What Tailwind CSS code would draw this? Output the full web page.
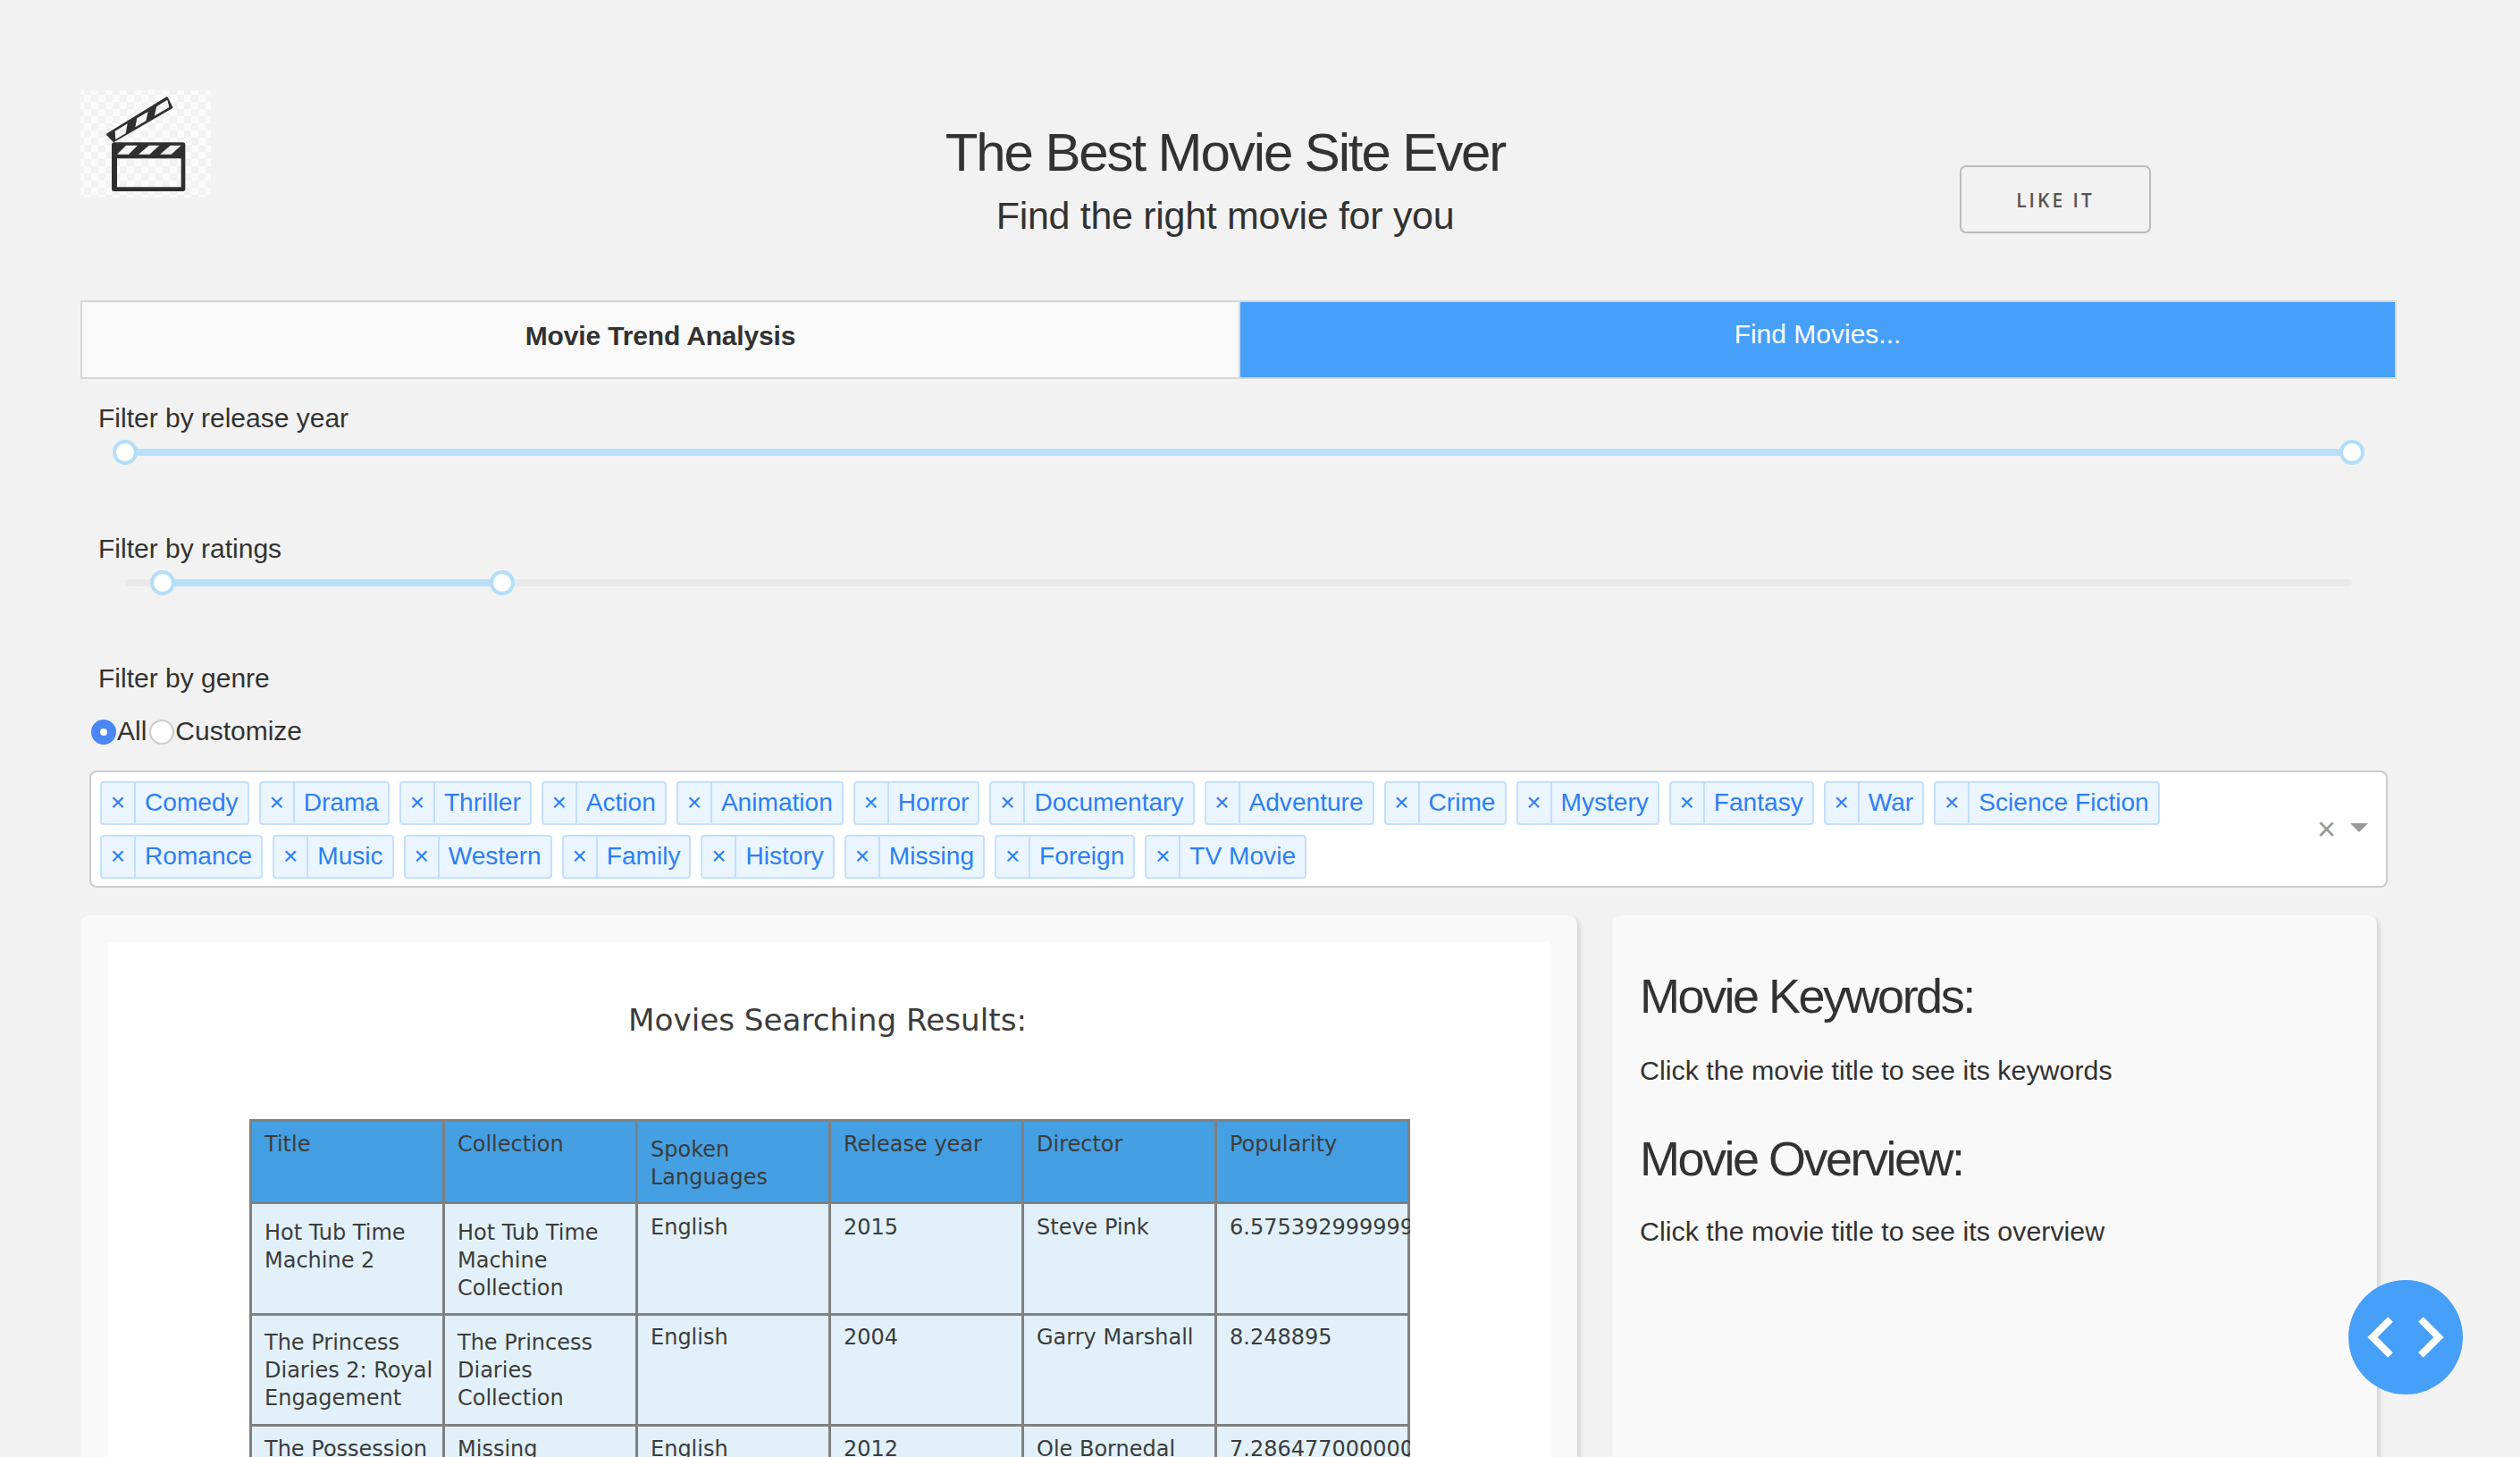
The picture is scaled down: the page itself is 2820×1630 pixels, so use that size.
<!DOCTYPE html>
<html lang="en">
  <head>
    <meta charset="UTF-8" />
    <title>The Best Movie Site Ever</title>
    <script src="https://cdn.jsdelivr.net/npm/@tailwindcss/browser@4"></script>
  </head>
  <body class="bg-[#f2f2f2] font-['Liberation_Sans',Arial,sans-serif] text-[#323232]">
    <div class="relative h-[1630px] overflow-hidden pt-[101px] pl-[90px] pr-[138px]">
      <!-- Header -->
      <div class="flex items-start h-[235px]">
        <svg width="146" height="120" viewBox="60 33 438 360" class="shrink-0">
          <defs>
            <pattern id="checks" width="48" height="48" patternUnits="userSpaceOnUse">
              <rect width="48" height="48" fill="#fbfbfb" />
              <rect width="24" height="24" fill="#f2f2f2" />
              <rect x="24" y="24" width="24" height="24" fill="#f2f2f2" />
            </pattern>
          </defs>
          <rect x="60" y="33" width="438" height="360" fill="url(#checks)" />
          <path fill="#2f2f2f" stroke="#2f2f2f" stroke-width="8" stroke-linejoin="round" d="M151 181 L350 59 L366 90 L172 203 Z" />
          <path fill="#f4f4f4" d="M178 198 L176 170 L218 145 L212 178 Z M244 157 L250 127 L287 105 L280 136 Z M308 119 L316 87 L352 65 L358 90 Z" />
          <path fill="#2f2f2f" fill-rule="evenodd" d="M173 208 H404 Q412 208 412 216 V364 Q412 372 404 372 H173 Q165 372 165 364 V216 Q165 208 173 208 Z M183 262 V358 H398 V262 Z" />
          <path fill="#f4f4f4" d="M183 248 L213 218 L252 218 L222 248 Z M255 248 L290 218 L325 218 L292 248 Z M327 248 L362 218 L398 218 L365 248 Z" />
        </svg>
        <div class="w-[720px] ml-[775px] mt-[34px] text-center">
          <h1 class="text-[60px] leading-[72px] tracking-[-2.1px]">The Best Movie Site Ever</h1>
          <h2 class="mt-[8px] text-[43px] leading-[52px] tracking-[-0.3px]">Find the right movie for you</h2>
        </div>
        <button class="w-[214px] h-[76px] ml-[462px] mt-[84px] pt-[4px] border-2 border-[#bbbbbb] rounded-[7px] font-['Open_Sans',sans-serif] text-[21px] font-semibold tracking-[3px] text-[#555555]">LIKE IT</button>
      </div>

      <!-- Tabs -->
      <div class="flex h-[88px] text-[30px]">
        <div class="w-[1296px] flex items-center justify-center pb-[10px] bg-[#fafafa] border-2 border-r-0 border-[#d6d6d6] font-bold tracking-[-0.15px]">Movie Trend Analysis</div>
        <div class="flex-1 flex items-center justify-center pb-[14px] bg-[#469ff9] border-2 border-[#d6d6d6] text-white">Find Movies...</div>
      </div>

      <!-- Filters -->
      <div class="px-[10px]">
        <div class="h-[146px] pt-[23px]">
          <p class="pl-[10px] text-[30px] leading-[42px]">Filter by release year</p>
          <div class="relative h-[28px] mt-[3px] mx-[40px]">
            <div class="absolute inset-x-0 top-[10px] h-[8px] rounded-full bg-[#b7e0f8]"></div>
            <span class="absolute left-[-14px] top-0 w-[28px] h-[28px] rounded-full bg-white border-4 border-[#b3def8]"></span>
            <span class="absolute right-[-14px] top-0 w-[28px] h-[28px] rounded-full bg-white border-4 border-[#b3def8]"></span>
          </div>
        </div>
        <div class="h-[146px] pt-[23px]">
          <p class="pl-[10px] text-[30px] leading-[42px]">Filter by ratings</p>
          <div class="relative h-[28px] mt-[3px] mx-[40px]">
            <div class="absolute inset-x-0 top-[10px] h-[8px] rounded-full bg-[#e9e9e9]"></div>
            <div class="absolute left-[42px] w-[380px] top-[10px] h-[8px] bg-[#b7e0f8]"></div>
            <span class="absolute left-[28px] top-0 w-[28px] h-[28px] rounded-full bg-white border-4 border-[#b3def8]"></span>
            <span class="absolute left-[408px] top-0 w-[28px] h-[28px] rounded-full bg-white border-4 border-[#b3def8]"></span>
          </div>
        </div>
        <div class="pt-[22px]">
          <p class="pl-[10px] text-[30px] leading-[42px]">Filter by genre</p>
          <div class="flex items-center h-[28px] mt-[25px] pl-[2px] text-[30px]">
            <input type="radio" name="genre" checked class="appearance-none w-[28px] h-[28px] rounded-full bg-white border-[10px] border-[#4a86f4]" />
            <span class="ml-[1px] mr-[3px] pb-[4px]">All</span>
            <input type="radio" name="genre" class="appearance-none w-[28px] h-[28px] rounded-full bg-white border-2 border-[#cccccc]" />
            <span class="ml-[1px] pb-[4px]">Customize</span>
          </div>

          <!-- Genre multi select -->
          <div class="relative flex flex-wrap content-start w-[2572px] h-[131px] mt-[29px] pt-[10px] pl-[10px] pr-[140px] gap-[11px] bg-white border-2 border-[#cccccc] rounded-[8px] text-[28.1px] text-[#2b7ff5]">
            <div class="flex h-[49px] bg-[#ebf5ff] border-2 border-[#c2e0ff] rounded-[4px]"><span class="w-[38px] border-r-2 border-[#c2e0ff] text-center leading-[43px]">×</span><span class="pl-[10px] pr-[10px] leading-[44px]">Comedy</span></div>
            <div class="flex h-[49px] bg-[#ebf5ff] border-2 border-[#c2e0ff] rounded-[4px]"><span class="w-[38px] border-r-2 border-[#c2e0ff] text-center leading-[43px]">×</span><span class="pl-[10px] pr-[10px] leading-[44px]">Drama</span></div>
            <div class="flex h-[49px] bg-[#ebf5ff] border-2 border-[#c2e0ff] rounded-[4px]"><span class="w-[38px] border-r-2 border-[#c2e0ff] text-center leading-[43px]">×</span><span class="pl-[10px] pr-[10px] leading-[44px]">Thriller</span></div>
            <div class="flex h-[49px] bg-[#ebf5ff] border-2 border-[#c2e0ff] rounded-[4px]"><span class="w-[38px] border-r-2 border-[#c2e0ff] text-center leading-[43px]">×</span><span class="pl-[10px] pr-[10px] leading-[44px]">Action</span></div>
            <div class="flex h-[49px] bg-[#ebf5ff] border-2 border-[#c2e0ff] rounded-[4px]"><span class="w-[38px] border-r-2 border-[#c2e0ff] text-center leading-[43px]">×</span><span class="pl-[10px] pr-[10px] leading-[44px]">Animation</span></div>
            <div class="flex h-[49px] bg-[#ebf5ff] border-2 border-[#c2e0ff] rounded-[4px]"><span class="w-[38px] border-r-2 border-[#c2e0ff] text-center leading-[43px]">×</span><span class="pl-[10px] pr-[10px] leading-[44px]">Horror</span></div>
            <div class="flex h-[49px] bg-[#ebf5ff] border-2 border-[#c2e0ff] rounded-[4px]"><span class="w-[38px] border-r-2 border-[#c2e0ff] text-center leading-[43px]">×</span><span class="pl-[10px] pr-[10px] leading-[44px]">Documentary</span></div>
            <div class="flex h-[49px] bg-[#ebf5ff] border-2 border-[#c2e0ff] rounded-[4px]"><span class="w-[38px] border-r-2 border-[#c2e0ff] text-center leading-[43px]">×</span><span class="pl-[10px] pr-[10px] leading-[44px]">Adventure</span></div>
            <div class="flex h-[49px] bg-[#ebf5ff] border-2 border-[#c2e0ff] rounded-[4px]"><span class="w-[38px] border-r-2 border-[#c2e0ff] text-center leading-[43px]">×</span><span class="pl-[10px] pr-[10px] leading-[44px]">Crime</span></div>
            <div class="flex h-[49px] bg-[#ebf5ff] border-2 border-[#c2e0ff] rounded-[4px]"><span class="w-[38px] border-r-2 border-[#c2e0ff] text-center leading-[43px]">×</span><span class="pl-[10px] pr-[10px] leading-[44px]">Mystery</span></div>
            <div class="flex h-[49px] bg-[#ebf5ff] border-2 border-[#c2e0ff] rounded-[4px]"><span class="w-[38px] border-r-2 border-[#c2e0ff] text-center leading-[43px]">×</span><span class="pl-[10px] pr-[10px] leading-[44px]">Fantasy</span></div>
            <div class="flex h-[49px] bg-[#ebf5ff] border-2 border-[#c2e0ff] rounded-[4px]"><span class="w-[38px] border-r-2 border-[#c2e0ff] text-center leading-[43px]">×</span><span class="pl-[10px] pr-[10px] leading-[44px]">War</span></div>
            <div class="flex h-[49px] bg-[#ebf5ff] border-2 border-[#c2e0ff] rounded-[4px]"><span class="w-[38px] border-r-2 border-[#c2e0ff] text-center leading-[43px]">×</span><span class="pl-[10px] pr-[10px] leading-[44px]">Science Fiction</span></div>
            <div class="flex h-[49px] bg-[#ebf5ff] border-2 border-[#c2e0ff] rounded-[4px]"><span class="w-[38px] border-r-2 border-[#c2e0ff] text-center leading-[43px]">×</span><span class="pl-[10px] pr-[10px] leading-[44px]">Romance</span></div>
            <div class="flex h-[49px] bg-[#ebf5ff] border-2 border-[#c2e0ff] rounded-[4px]"><span class="w-[38px] border-r-2 border-[#c2e0ff] text-center leading-[43px]">×</span><span class="pl-[10px] pr-[10px] leading-[44px]">Music</span></div>
            <div class="flex h-[49px] bg-[#ebf5ff] border-2 border-[#c2e0ff] rounded-[4px]"><span class="w-[38px] border-r-2 border-[#c2e0ff] text-center leading-[43px]">×</span><span class="pl-[10px] pr-[10px] leading-[44px]">Western</span></div>
            <div class="flex h-[49px] bg-[#ebf5ff] border-2 border-[#c2e0ff] rounded-[4px]"><span class="w-[38px] border-r-2 border-[#c2e0ff] text-center leading-[43px]">×</span><span class="pl-[10px] pr-[10px] leading-[44px]">Family</span></div>
            <div class="flex h-[49px] bg-[#ebf5ff] border-2 border-[#c2e0ff] rounded-[4px]"><span class="w-[38px] border-r-2 border-[#c2e0ff] text-center leading-[43px]">×</span><span class="pl-[10px] pr-[10px] leading-[44px]">History</span></div>
            <div class="flex h-[49px] bg-[#ebf5ff] border-2 border-[#c2e0ff] rounded-[4px]"><span class="w-[38px] border-r-2 border-[#c2e0ff] text-center leading-[43px]">×</span><span class="pl-[10px] pr-[10px] leading-[44px]">Missing</span></div>
            <div class="flex h-[49px] bg-[#ebf5ff] border-2 border-[#c2e0ff] rounded-[4px]"><span class="w-[38px] border-r-2 border-[#c2e0ff] text-center leading-[43px]">×</span><span class="pl-[10px] pr-[10px] leading-[44px]">Foreign</span></div>
            <div class="flex h-[49px] bg-[#ebf5ff] border-2 border-[#c2e0ff] rounded-[4px]"><span class="w-[38px] border-r-2 border-[#c2e0ff] text-center leading-[43px]">×</span><span class="pl-[10px] pr-[10px] leading-[44px]">TV Movie</span></div>
            <span class="absolute right-[56px] top-[44px] text-[36px] leading-[40px] text-[#999999]">×</span>
            <span class="absolute right-[20px] top-[57px] w-0 h-0 border-x-[10px] border-x-transparent border-t-[10px] border-t-[#999999]"></span>
          </div>
        </div>
      </div>

      <!-- Result cards -->
      <div class="flex items-start mt-[31px]">
        <div class="w-[1675px] h-[700px] p-[30px] bg-[#f9f9f9] rounded-[10px] shadow-[3px_3px_4px_#d3d3d3]">
          <div class="h-[640px] pt-[64px] pl-[159px] bg-white font-['DejaVu_Sans',sans-serif] text-[#3c3c3c]">
            <p class="w-[1294px] text-center text-[34.2px] leading-[46px]">Movies Searching Results:</p>
            <div class="w-[1299px] mt-[88px] overflow-hidden">
              <table class="w-[1299px] table-fixed border-collapse text-[24px] leading-[31px] [&_td]:border-[3px] [&_td]:border-[#808080] [&_td]:align-top [&_td]:pl-[14px]">
                <tr class="h-[92px] bg-[#45a0e3]">
                  <td class="pt-[10px]">Title</td>
                  <td class="pt-[10px]">Collection</td>
                  <td class="pt-[16px]">Spoken Languages</td>
                  <td class="pt-[10px]">Release year</td>
                  <td class="pt-[10px]">Director</td>
                  <td class="pt-[10px]">Popularity</td>
                </tr>
                <tr class="h-[125px] bg-[#e2f1f9]">
                  <td class="pt-[17px]">Hot Tub Time Machine 2</td>
                  <td class="pt-[17px]">Hot Tub Time Machine Collection</td>
                  <td class="pt-[11px]">English</td>
                  <td class="pt-[11px]">2015</td>
                  <td class="pt-[11px]">Steve Pink</td>
                  <td class="pt-[11px] whitespace-nowrap">6.575392999999999</td>
                </tr>
                <tr class="h-[124px] bg-[#e2f1f9]">
                  <td class="pt-[15px]">The Princess Diaries 2: Royal Engagement</td>
                  <td class="pt-[15px]">The Princess Diaries Collection</td>
                  <td class="pt-[9px]">English</td>
                  <td class="pt-[9px]">2004</td>
                  <td class="pt-[9px]">Garry Marshall</td>
                  <td class="pt-[9px]">8.248895</td>
                </tr>
                <tr class="h-[125px] bg-[#e2f1f9]">
                  <td class="pt-[10px]">The Possession</td>
                  <td class="pt-[10px]">Missing</td>
                  <td class="pt-[10px]">English</td>
                  <td class="pt-[10px]">2012</td>
                  <td class="pt-[10px]">Ole Bornedal</td>
                  <td class="pt-[10px] whitespace-nowrap">7.286477000000001</td>
                </tr>
              </table>
            </div>
          </div>
        </div>
        <div class="w-[856px] h-[700px] ml-[39px] pt-[60px] pl-[31px] bg-[#f9f9f9] rounded-[10px] shadow-[3px_3px_4px_#d3d3d3]">
          <h3 class="text-[54px] leading-[60px] tracking-[-2.5px]">Movie Keywords:</h3>
          <p class="mt-[33px] text-[30.4px] leading-[40px]">Click the movie title to see its keywords</p>
          <h3 class="mt-[49px] text-[54px] leading-[60px] tracking-[-2.5px]">Movie Overview:</h3>
          <p class="mt-[31px] text-[30.4px] leading-[40px]">Click the movie title to see its overview</p>
        </div>
      </div>

      <!-- Floating code button -->
      <button class="absolute left-[2628px] top-[1432px] flex items-center justify-center w-[128px] h-[128px] rounded-full bg-[#469ff9]">
        <svg width="128" height="128" viewBox="0 0 128 128" fill="none" stroke="white" stroke-width="8">
          <path d="M47 44 L27 64 L47 84" />
          <path d="M81 44 L101 64 L81 84" />
        </svg>
      </button>
    </div>
  </body>
</html>
